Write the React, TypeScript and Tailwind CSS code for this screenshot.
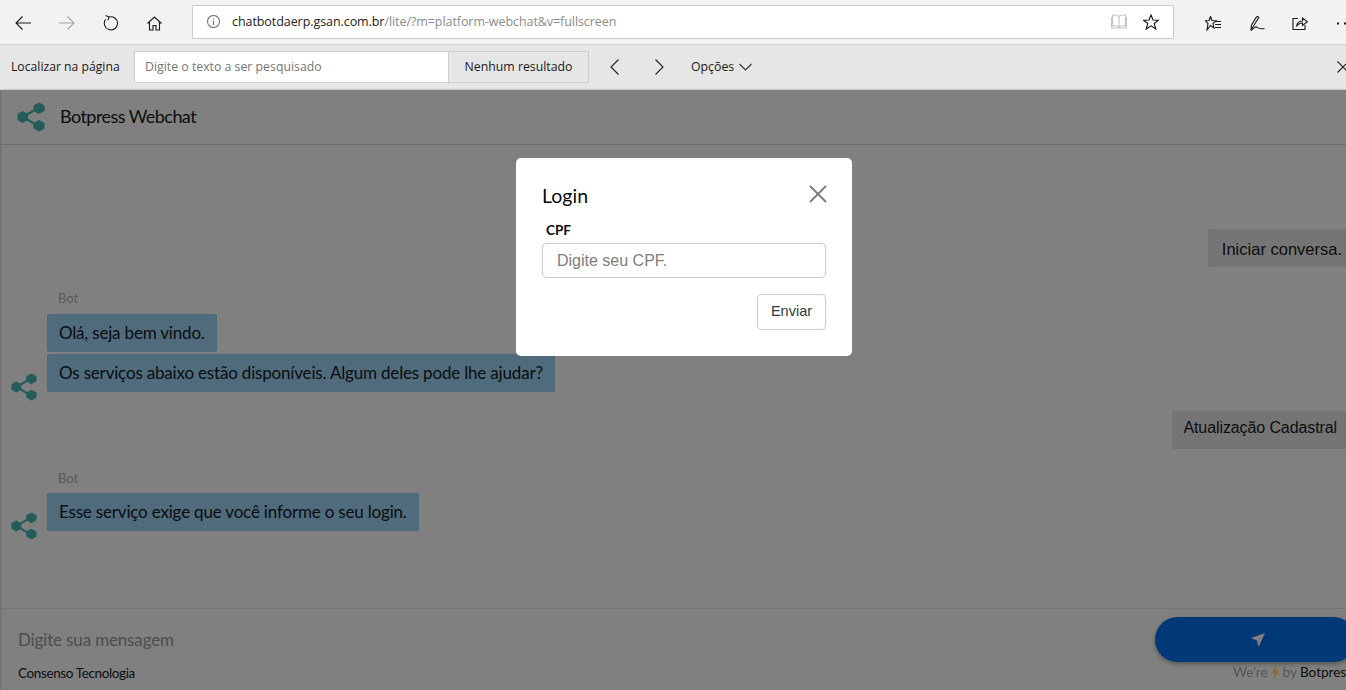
function BotLogo({ size, color = "#235c58" }: { size: number; color?: string }) {
  return (
    <svg width={size} height={size * 30 / 28} viewBox="0 0 28 30" className="shrink-0">
      <path d="M6 15 L21 6 M6 15 L21 24" stroke={color} strokeWidth="2.2" fill="none" />
      <polygon points="5.5,9 11,12 11,18 5.5,21 0.5,18 0.5,12" fill={color} />
      <polygon points="22,0.5 27.5,3.5 27.5,9 22,12 16.5,9 16.5,3.5" fill={color} />
      <polygon points="22,18 27.5,21 27.5,26.5 22,29.5 16.5,26.5 16.5,21" fill={color} />
    </svg>
  );
}

function Glyph({ w, h, children, className = "", stroke = "#1a1a1a" }: { w: number; h: number; children: React.ReactNode; className?: string; stroke?: string }) {
  return (
    <svg width={w} height={h} viewBox={`0 0 ${w} ${h}`} fill="none" stroke={stroke} strokeWidth="1.1" className={`shrink-0 ${className}`}>
      {children}
    </svg>
  );
}

const STAR = "8,1 10,6 15.5,6.2 11.2,9.5 12.8,15 8,11.8 3.2,15 4.8,9.5 0.5,6.2 6,6";

function BotBubble({ text, tight }: { text: string; tight?: boolean }) {
  return (
    <div className={`w-fit h-[38px] flex items-center px-[12px] bg-[#4f6b7c] rounded-[2px] text-[17px] tracking-[-0.18px] text-[#0a0d10] ${tight ? "mb-[2px]" : ""}`}>
      {text}
    </div>
  );
}

export default function App() {
  return (
    <div className="relative w-[1346px] h-[690px] overflow-hidden flex flex-col bg-[#808080] font-['Lato',sans-serif]">
      {/* Browser toolbar */}
      <div className="h-[45px] shrink-0 flex items-center bg-[#f2f2f2] border-b border-[#d0d0d0] font-['Open_Sans',sans-serif]">
        <div className="w-[192px] shrink-0 flex items-center pl-[15px] gap-[28px] pt-[2px]">
          <Glyph w={16} h={14}><path d="M16 7 H1 M7.5 0.5 L1 7 L7.5 13.5" /></Glyph>
          <Glyph w={16} h={14} stroke="#a6a6a6"><path d="M0 7 H15 M8.5 0.5 L15 7 L8.5 13.5" /></Glyph>
          <Glyph w={16} h={16}><path d="M6 2 A6.6 6.6 0 1 1 2.6 4.4 M2.6 0.6 L6 2 L4.8 5.2" /></Glyph>
          <Glyph w={15} h={15}><path d="M0.5 7.5 L7.5 1 L14.5 7.5 M2.5 6 V14 H6 V9.5 H9 V14 H12.5 V6" /></Glyph>
        </div>
        <div className="w-[982px] h-[34px] mb-[1px] shrink-0 flex items-center bg-white border border-[#cccccc] pl-[14px] pr-[14px]">
          <Glyph w={13} h={13} stroke="#7a7a7a"><circle cx="6.5" cy="6.5" r="6" /><path d="M6.5 5.5 V10 M6.5 3 V4.2" /></Glyph>
          <div className="ml-[12px] pt-[2px] text-[12.5px] tracking-[-0.07px] whitespace-nowrap">
            <span className="text-[#222222]">chatbotdaerp.gsan.com.br</span>
            <span className="text-[#8c8c8c]">/lite/?m=platform-webchat&amp;v=fullscreen</span>
          </div>
          <Glyph w={16} h={15} stroke="#c4c4c4" className="ml-auto">
            <path d="M8 2.5 C6.5 1 3.5 0.8 1.5 1.2 V12 C3.5 11.6 6.5 11.8 8 13 C9.5 11.8 12.5 11.6 14.5 12 V1.2 C12.5 0.8 9.5 1 8 2.5 V13 M0.5 3 V14 H15.5 V3" />
          </Glyph>
          <Glyph w={16} h={16} stroke="#111111" className="ml-[16px]"><polygon points={STAR} /></Glyph>
        </div>
        <div className="flex-1 flex items-center pl-[31px] pt-[2px] overflow-hidden">
          <Glyph w={16} h={15}>
            <polygon points="5.5,0.5 7,4.5 11,4.8 8,7.5 9,12 5.5,9.5 2,14 3,7.5 0.2,4.8 4,4.5" />
            <path d="M10 5.5 H16 M10 8.5 H16 M10 11.5 H16" />
          </Glyph>
          <Glyph w={15} h={15} className="ml-[29px]">
            <path d="M1 13 L1.5 9 L6.5 1 Q8 0 8.8 1.5 L3.5 10 Z M1 14.5 C3 13.5 4.5 10 6.5 11 C8 12 9 13.5 14.5 12.5" />
          </Glyph>
          <Glyph w={16} h={15} className="ml-[27px]">
            <path d="M6 2.5 H1 V13.5 H13 V9 M4.5 10.5 C5 7 7.5 5 10.5 5 V2 L15.5 5.8 L10.5 9.5 V7 C8 7 6 8.2 4.5 10.5 Z" />
          </Glyph>
          <svg width="14" height="3" viewBox="0 0 14 3" className="ml-[29px] shrink-0" fill="#1a1a1a">
            <rect x="0" y="0.5" width="2" height="2" />
            <rect x="7" y="0.5" width="2" height="2" />
          </svg>
        </div>
      </div>

      {/* Find bar */}
      <div className="h-[45px] shrink-0 flex items-center bg-[#e6e6e6] border-b border-[#c8c8c8] text-[12.3px] font-['Open_Sans',sans-serif]">
        <span className="w-[134px] shrink-0 pl-[11px] text-[#1a1a1a] text-[12.2px]">Localizar na página</span>
        <div className="w-[315px] shrink-0 h-[32px] flex items-center bg-white border border-[#cfcfcf] pl-[10px] text-[#767676]">
          Digite o texto a ser pesquisado
        </div>
        <div className="w-[140px] shrink-0 h-[32px] flex items-center justify-center border border-l-0 border-[#cfcfcf] text-[#1a1a1a]">
          Nenhum resultado
        </div>
        <Glyph w={9} h={16} stroke="#222222" className="ml-[21px]"><path d="M8.5 0.5 L1 8 L8.5 15.5" /></Glyph>
        <Glyph w={9} h={16} stroke="#222222" className="ml-[36px]"><path d="M0.5 0.5 L8 8 L0.5 15.5" /></Glyph>
        <span className="ml-[27px] text-[#1a1a1a]">Opções</span>
        <Glyph w={13} h={8} stroke="#333333" className="ml-[5px]"><path d="M0.5 1 L6.5 7 L12.5 1" /></Glyph>
        <Glyph w={12} h={12} stroke="#222222" className="ml-auto -mr-[3px]"><path d="M0.5 0.5 L11.5 11.5 M11.5 0.5 L0.5 11.5" /></Glyph>
      </div>

      {/* Webchat */}
      <div className="flex-1 min-h-0 flex flex-col border-l border-[#707070]">
        <div className="h-[55px] shrink-0 flex items-center pl-[16px] pb-[1px] border-b border-[#6c6c6c]">
          <BotLogo size={28} />
          <span className="ml-[15px] text-[18px] tracking-[-0.55px] text-[#0d0d0d]">Botpress Webchat</span>
        </div>

        <div className="flex-1 min-h-0 flex flex-col pt-[84px] overflow-hidden">
          <div className="self-end h-[38px] flex items-center pl-[14px] pr-[4px] pt-[2px] bg-[#757575] rounded-l-[2px] text-[#0d0d0d] font-['Liberation_Sans',sans-serif] text-[16.5px]">
            Iniciar conversa.
          </div>

          <div className="mt-[23px] flex items-end pl-[10px]">
            <div className="w-[36px] shrink-0 -mb-[9px]"><BotLogo size={26} /></div>
            <div className="flex flex-col">
              <span className="ml-[11px] mb-[8px] text-[13px] leading-[16px] text-[#5a5a5a]">Bot</span>
              <BotBubble text="Olá, seja bem vindo." tight />
              <BotBubble text="Os serviços abaixo estão disponíveis. Algum deles pode lhe ajudar?" />
            </div>
          </div>

          <div className="mt-[19px] self-end h-[38px] flex items-center pl-[11px] pr-[9px] pb-[4px] bg-[#757575] rounded-l-[2px] text-[#0d0d0d] font-['Liberation_Sans',sans-serif] text-[16px] tracking-[-0.1px]">
            Atualização Cadastral
          </div>

          <div className="mt-[21px] flex items-end pl-[10px]">
            <div className="w-[36px] shrink-0 -mb-[9px]"><BotLogo size={26} /></div>
            <div className="flex flex-col">
              <span className="ml-[11px] mb-[7px] text-[13px] leading-[16px] text-[#5a5a5a]">Bot</span>
              <BotBubble text="Esse serviço exige que você informe o seu login." />
            </div>
          </div>
        </div>

        {/* Composer */}
        <div className="h-[82px] shrink-0 flex flex-col border-t border-[#747474] pl-[17px]">
          <div className="flex items-start">
            <span className="mt-[21px] text-[17px] leading-[20px] tracking-[-0.15px] text-[#4d4d4d]">Digite sua mensagem</span>
            <div className="ml-auto -mr-[10px] mt-[8px] w-[201px] h-[45px] flex items-center justify-center rounded-[23px] bg-[#003878] shadow-[0_2px_4px_rgba(0,0,0,0.35)]">
              <svg width="16" height="16" viewBox="0 0 16 16" className="ml-[5px]">
                <path d="M15 1 L1 6 L7 8.5 L8.5 15 Z" fill="#808080" />
              </svg>
            </div>
          </div>
          <div className="mt-[2px] flex items-center justify-between text-[13.5px] leading-[18px] whitespace-nowrap">
            <span className="tracking-[-0.37px] text-[#0d0d0d]">Consenso Tecnologia</span>
            <span className="flex items-center text-[#565656] -mr-[6px] -mt-[2px]">
              We're
              <svg width="9" height="14" viewBox="0 0 9 14" className="mx-[3px]">
                <path d="M6 0 L0.5 8 L3.8 8 L2.5 14 L8.5 5.5 L5 5.5 Z" fill="#8a6d2c" />
              </svg>
              by <span className="ml-[3px] text-[#0d0d0d]">Botpress</span>
            </span>
          </div>
        </div>
      </div>

      {/* Login modal */}
      <div className="absolute left-[516px] top-[158px] w-[336px] h-[198px] bg-white rounded-[5px] px-[26px] pt-[24px]">
        <div className="flex items-start justify-between">
          <span className="text-[19.5px] leading-[28px] text-[#0a0a0a]">Login</span>
          <svg width="18" height="18" viewBox="0 0 18 18" fill="none" stroke="#7a7a7a" strokeWidth="1.8" className="mt-[3px] mr-[-1px] shrink-0">
            <path d="M1 1 L17 17 M17 1 L1 17" />
          </svg>
        </div>
        <div className="mt-[11px] ml-[4px] text-[13.5px] leading-[18px] font-bold text-[#0a0a0a]">CPF</div>
        <div className="mt-[4px] h-[35px] flex items-center rounded-[4px] border border-[#cccccc] pl-[14px] font-['Liberation_Sans',sans-serif] text-[16px] text-[#7d7d7d]">
          Digite seu CPF.
        </div>
        <div className="mt-[16px] flex justify-end">
          <div className="w-[69px] h-[36px] flex items-center justify-center rounded-[4px] border border-[#cccccc] font-['Liberation_Sans',sans-serif] text-[14.5px] text-[#333a40]">
            Enviar
          </div>
        </div>
      </div>
    </div>
  );
}
